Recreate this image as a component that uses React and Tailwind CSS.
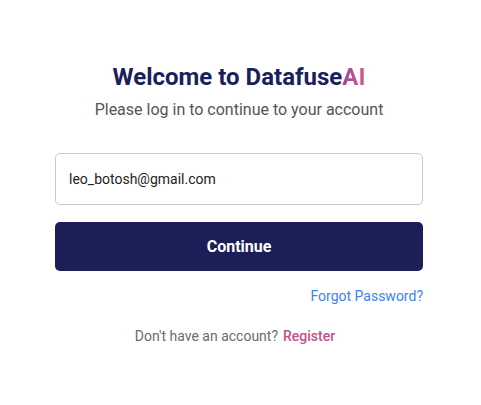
import React from "react";

export default function App() {
  return (
    <div className="min-h-[405px] w-full bg-white" style={{ fontFamily: "Roboto, 'Liberation Sans', sans-serif" }}>
      <div className="ml-[55px] w-[368px] pt-[62px] flex flex-col">
        <h1 className="text-center text-[24px] leading-[30px] font-bold text-[#1b1f5c]">
          Welcome to Datafuse
          <span className="bg-gradient-to-r from-[#9a469c] to-[#d35c8a] bg-clip-text text-transparent">AI</span>
        </h1>
        <p className="mt-[6px] text-center text-[16px] leading-[24px] text-[#555555]">
          Please log in to continue to your account
        </p>
        <input
          type="text"
          readOnly
          value="leo_botosh@gmail.com"
          className="mt-[31px] h-[52px] w-full rounded-[5px] border border-[#c8c8c8] bg-white px-[13px] text-[14px] text-[#222222] outline-none"
        />
        <button className="mt-[17px] h-[49px] w-full rounded-[5px] bg-[#1b1f56] text-[16px] font-bold text-white">
          Continue
        </button>
        <div className="mt-[15px] flex justify-end">
          <a className="text-[14px] leading-[20px] text-[#3b82f6]">Forgot Password?</a>
        </div>
        <div className="mt-[20px] flex justify-center gap-[5px] pr-[8px] text-[14px] leading-[20px]">
          <span className="text-[#6b6b6b]">Don't have an account?</span>
          <a className="font-medium text-[#c2508c]">Register</a>
        </div>
      </div>
    </div>
  );
}
